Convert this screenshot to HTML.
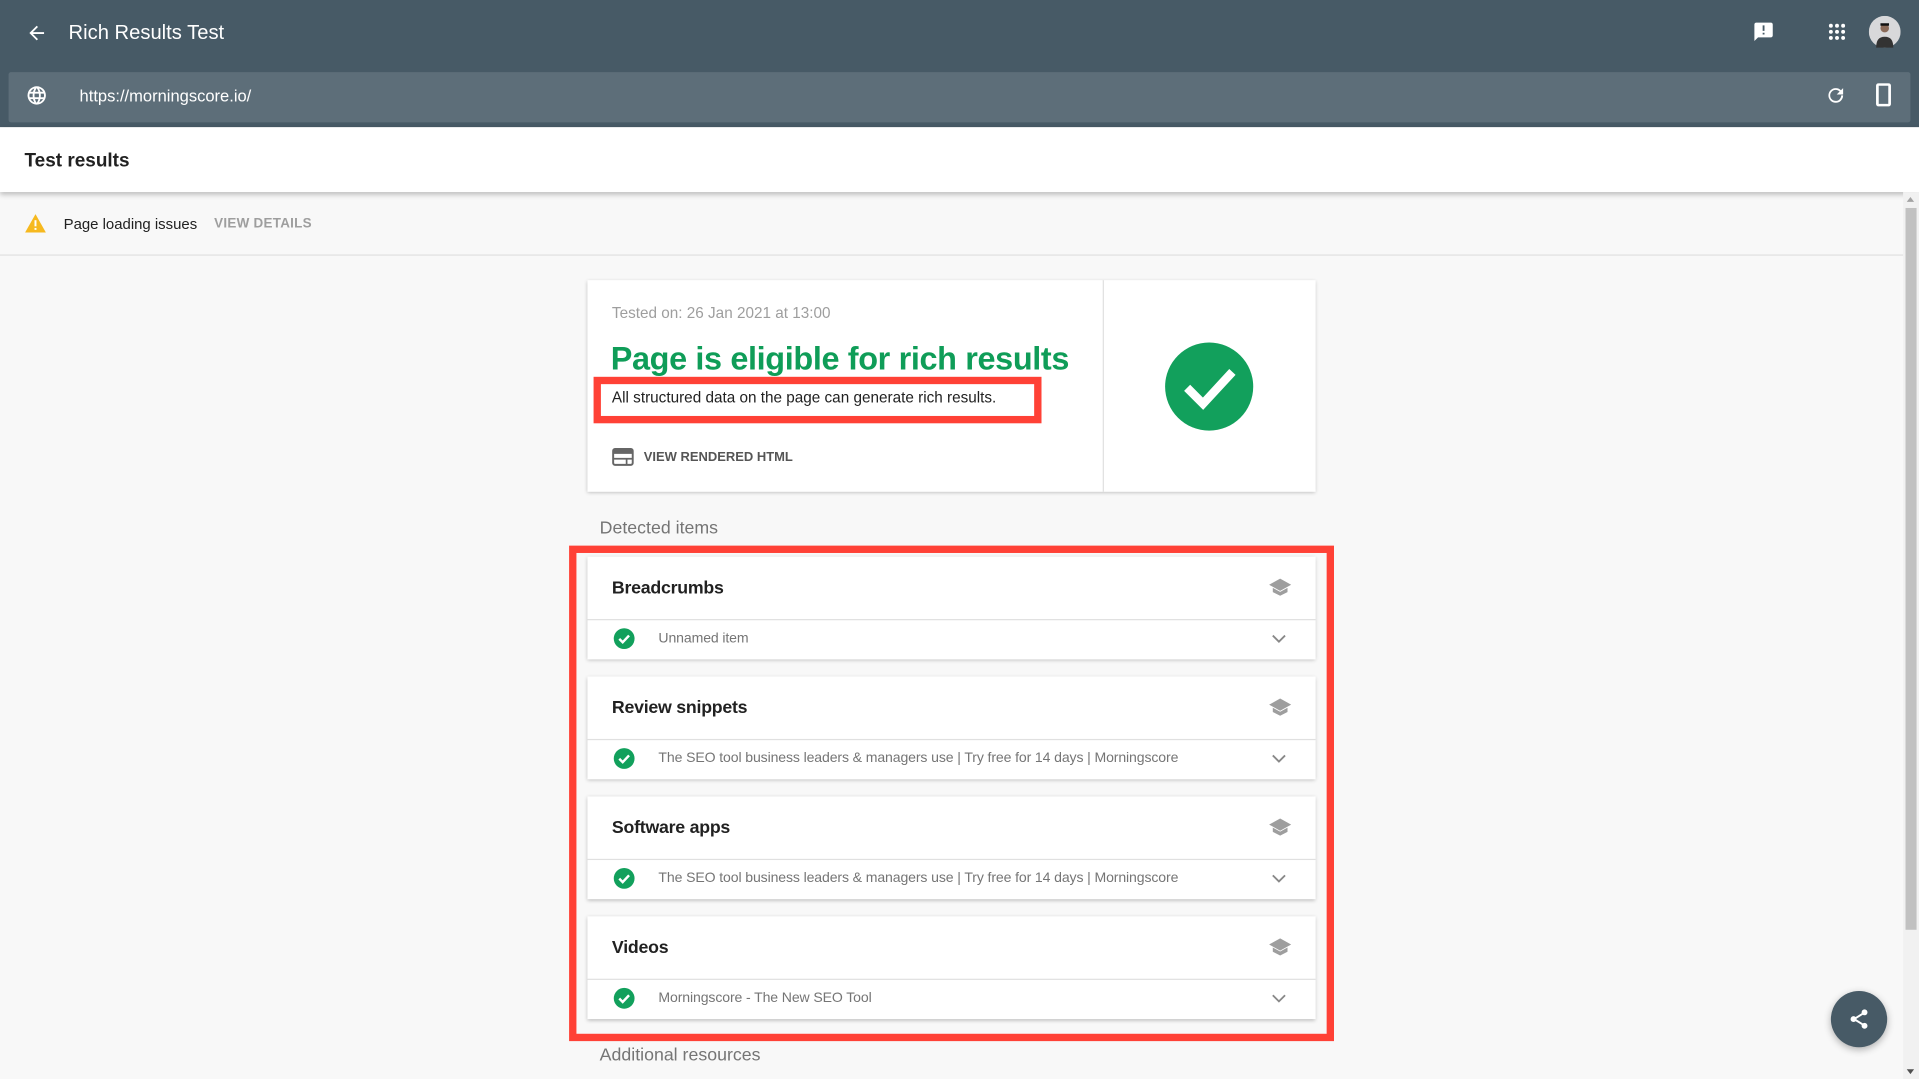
<!DOCTYPE html>
<html><head><meta charset="utf-8"><style>
html,body{margin:0;padding:0;width:1919px;height:1079px;overflow:hidden;background:#f8f8f8;font-family:"Liberation Sans",Arial,sans-serif}
#w{position:absolute;left:0;top:0;width:1568px;height:882px;transform:scale(1.22385,1.2234);transform-origin:0 0;background:#f8f8f8}
.a{position:absolute}
.hd{left:0;top:0;width:1568px;height:104px;background:#475a66}
.url{left:7px;top:59px;width:1554px;height:41px;background:#5d6e79;border-radius:2px}
.tb{left:0;top:104px;width:1568px;height:53px;background:#fff;box-shadow:0 2px 4px rgba(0,0,0,.25)}
.card{background:#fff;box-shadow:0 1px 3px rgba(0,0,0,.25)}
.t{white-space:nowrap}
.item{left:480px;width:595px;height:84px}
.item .h{position:absolute;left:20px;top:18px;font-size:14.5px;font-weight:bold;color:#212121;letter-spacing:-.2px}
.item .ln{position:absolute;left:0;top:51px;width:595px;height:1px;background:#e0e0e0}
.item .r{position:absolute;left:58px;top:61px;font-size:11.5px;color:#757575;letter-spacing:-.1px}
.item .ck{position:absolute;left:21px;top:58px}
.item .cap{position:absolute;left:556px;top:17px}
.item .ch{position:absolute;left:559px;top:63px}
</style></head><body><div id="w">
<div class="a hd"></div>
<svg class="a" style="left:21px;top:18px" width="18" height="18" viewBox="0 0 24 24"><path d="M20 11H7.8l5.6-5.6L12 4l-8 8 8 8 1.4-1.4L7.8 13H20z" fill="#fff"/></svg>
<div class="a t" style="left:56px;top:18px;font-size:16.5px;color:#fff">Rich Results Test</div>
<svg class="a" style="left:1432px;top:17px" width="18" height="18" viewBox="0 0 24 24"><path d="M20 2H4c-1.1 0-2 .9-2 2v18l4-4h14c1.1 0 2-.9 2-2V4c0-1.1-.9-2-2-2zm-7 9h-2V5h2v6zm0 4h-2v-2h2v2z" fill="#fff"/></svg>
<svg class="a" style="left:1493px;top:18px" width="16" height="16" viewBox="0 0 16 16" fill="#fff"><circle cx="3" cy="3" r="1.6"/><circle cx="8" cy="3" r="1.6"/><circle cx="13" cy="3" r="1.6"/><circle cx="3" cy="8" r="1.6"/><circle cx="8" cy="8" r="1.6"/><circle cx="13" cy="8" r="1.6"/><circle cx="3" cy="13" r="1.6"/><circle cx="8" cy="13" r="1.6"/><circle cx="13" cy="13" r="1.6"/></svg>
<svg class="a" style="left:1527px;top:13px" width="26" height="26" viewBox="0 0 26 26"><circle cx="13" cy="13" r="13" fill="#d8d8da"/><path d="M6 26c0-6 2-9 7-9s7 3 7 9z" fill="#333"/><circle cx="13" cy="10" r="3.5" fill="#8a6a58"/><path d="M9.5 8h7v-2h-7z" fill="#111"/></svg>
<div class="a url"></div>
<svg class="a" style="left:21px;top:69px" width="18" height="18" viewBox="0 0 24 24"><path d="M12 2a10 10 0 100 20 10 10 0 000-20zm6.9 6h-2.9a15.7 15.7 0 00-1.4-3.6A8 8 0 0118.9 8zM12 4c.8 1.2 1.5 2.5 1.9 4h-3.8c.4-1.4 1.1-2.8 1.9-4zM4.3 14a8 8 0 010-4h3.4a16.5 16.5 0 000 4zm.8 2h2.9c.3 1.3.8 2.5 1.4 3.6A8 8 0 015.1 16zM8 8H5.1a8 8 0 014.3-3.6C8.8 5.5 8.3 6.7 8 8zm4 12c-.8-1.2-1.5-2.5-1.9-4h3.8c-.4 1.4-1.1 2.8-1.9 4zm2.3-6H9.7a14.7 14.7 0 010-4h4.6a14.7 14.7 0 010 4zm.3 5.6c.6-1.1 1.1-2.3 1.4-3.6h2.9a8 8 0 01-4.3 3.6zm1.7-5.6a16.5 16.5 0 000-4h3.4a8 8 0 010 4z" fill="#fff"/></svg>
<div class="a t" style="left:65px;top:71px;font-size:13.5px;color:#fff">https://morningscore.io/</div>
<svg class="a" style="left:1491px;top:69px" width="18" height="18" viewBox="0 0 24 24"><path d="M17.65 6.35A7.96 7.96 0 0012 4a8 8 0 108 8h-2.1A6 6 0 1112 6c1.66 0 3.14.69 4.22 1.78L13 11h7V4z" fill="#fff"/></svg>
<svg class="a" style="left:1530px;top:68px" width="18" height="19" viewBox="0 0 18 19"><rect x="4" y="1" width="10" height="17" rx="1" fill="none" stroke="#fff" stroke-width="2.2"/></svg>
<div class="a tb"></div>
<div class="a t" style="left:20px;top:123px;font-size:15.5px;font-weight:bold;color:#212121">Test results</div>
<svg class="a" style="left:20px;top:174px" width="18" height="17" viewBox="0 0 18 17"><path d="M9 1L17.5 16H.5z" fill="#f6b91f"/><rect x="8.2" y="6" width="1.6" height="5" fill="#fff"/><rect x="8.2" y="12.3" width="1.6" height="1.6" fill="#fff"/></svg>
<div class="a t" style="left:52px;top:176px;font-size:12.2px;color:#212121">Page loading issues</div>
<div class="a t" style="left:175px;top:177px;font-size:11px;font-weight:bold;color:#9e9e9e;letter-spacing:.2px">VIEW DETAILS</div>
<div class="a" style="left:0;top:208px;width:1555px;height:1px;background:#e0e0e0"></div>
<div class="a" style="left:1555px;top:157px;width:13px;height:725px;background:#f1f1f1"></div>
<div class="a" style="left:1557px;top:170px;width:9px;height:590px;background:#c1c1c1"></div>
<div class="a" style="left:1558px;top:161px;width:0;height:0;border-left:3.5px solid transparent;border-right:3.5px solid transparent;border-bottom:4px solid #a3a3a3"></div>
<div class="a" style="left:1558px;top:874px;width:0;height:0;border-left:3.5px solid transparent;border-right:3.5px solid transparent;border-top:4px solid #505050"></div>

<div class="a card" style="left:480px;top:229px;width:595px;height:173px"></div>
<div class="a" style="left:901px;top:229px;width:1px;height:173px;background:#e0e0e0"></div>
<div class="a t" style="left:500px;top:249px;font-size:12.5px;color:#9e9e9e">Tested on: 26 Jan 2021 at 13:00</div>
<div class="a t" style="left:499px;top:278px;font-size:26.5px;font-weight:bold;color:#0f9d58;letter-spacing:-.3px">Page is eligible for rich results</div>
<div class="a" style="left:485px;top:308px;width:354px;height:26px;border:6px solid #ff4136"></div>
<div class="a t" style="left:500px;top:318px;font-size:12.5px;color:#212121">All structured data on the page can generate rich results.</div>
<svg class="a" style="left:500px;top:366px" width="18" height="15" viewBox="0 0 18 15"><rect x="1" y="1" width="16" height="13" rx="1.5" fill="none" stroke="#666" stroke-width="1.6"/><rect x="1" y="1" width="16" height="4" fill="#666"/><path d="M1 9h16M12 9v5" stroke="#666" stroke-width="1.4"/></svg>
<div class="a t" style="left:526px;top:368px;font-size:10.6px;font-weight:bold;color:#555;letter-spacing:0">VIEW RENDERED HTML</div>
<svg class="a" style="left:951px;top:279px" width="74" height="74" viewBox="0 0 74 74"><circle cx="37" cy="37" r="36" fill="#12a05c"/><path d="M19 38l13 13 24-26" fill="none" stroke="#fff" stroke-width="7"/></svg>

<div class="a t" style="left:490px;top:424px;font-size:14.5px;color:#757575">Detected items</div>

<div class="a card item" style="top:455px"><div class="h">Breadcrumbs</div><div class="ln"></div>
<svg class="ck" width="18" height="18" viewBox="0 0 18 18"><circle cx="9" cy="9" r="8.5" fill="#12a05c"/><path d="M5 9.2l2.8 2.8 5.2-5.5" fill="none" stroke="#fff" stroke-width="2"/></svg>
<div class="r">Unnamed item</div>
<svg class="cap" width="20" height="16" viewBox="0 0 20 16"><path d="M10 1L1 6l9 5 9-5z" fill="#9e9e9e"/><path d="M4 8.5v3.5l6 3 6-3V8.5l-6 3.3z" fill="#9e9e9e"/></svg>
<svg class="ch" width="12" height="8" viewBox="0 0 12 8"><path d="M1 1.5l5 5 5-5" fill="none" stroke="#888" stroke-width="1.5"/></svg></div>

<div class="a card item" style="top:553px"><div class="h">Review snippets</div><div class="ln"></div>
<svg class="ck" width="18" height="18" viewBox="0 0 18 18"><circle cx="9" cy="9" r="8.5" fill="#12a05c"/><path d="M5 9.2l2.8 2.8 5.2-5.5" fill="none" stroke="#fff" stroke-width="2"/></svg>
<div class="r">The SEO tool business leaders &amp; managers use | Try free for 14 days | Morningscore</div>
<svg class="cap" width="20" height="16" viewBox="0 0 20 16"><path d="M10 1L1 6l9 5 9-5z" fill="#9e9e9e"/><path d="M4 8.5v3.5l6 3 6-3V8.5l-6 3.3z" fill="#9e9e9e"/></svg>
<svg class="ch" width="12" height="8" viewBox="0 0 12 8"><path d="M1 1.5l5 5 5-5" fill="none" stroke="#888" stroke-width="1.5"/></svg></div>

<div class="a card item" style="top:651px"><div class="h">Software apps</div><div class="ln"></div>
<svg class="ck" width="18" height="18" viewBox="0 0 18 18"><circle cx="9" cy="9" r="8.5" fill="#12a05c"/><path d="M5 9.2l2.8 2.8 5.2-5.5" fill="none" stroke="#fff" stroke-width="2"/></svg>
<div class="r">The SEO tool business leaders &amp; managers use | Try free for 14 days | Morningscore</div>
<svg class="cap" width="20" height="16" viewBox="0 0 20 16"><path d="M10 1L1 6l9 5 9-5z" fill="#9e9e9e"/><path d="M4 8.5v3.5l6 3 6-3V8.5l-6 3.3z" fill="#9e9e9e"/></svg>
<svg class="ch" width="12" height="8" viewBox="0 0 12 8"><path d="M1 1.5l5 5 5-5" fill="none" stroke="#888" stroke-width="1.5"/></svg></div>

<div class="a card item" style="top:749px"><div class="h">Videos</div><div class="ln"></div>
<svg class="ck" width="18" height="18" viewBox="0 0 18 18"><circle cx="9" cy="9" r="8.5" fill="#12a05c"/><path d="M5 9.2l2.8 2.8 5.2-5.5" fill="none" stroke="#fff" stroke-width="2"/></svg>
<div class="r">Morningscore - The New SEO Tool</div>
<svg class="cap" width="20" height="16" viewBox="0 0 20 16"><path d="M10 1L1 6l9 5 9-5z" fill="#9e9e9e"/><path d="M4 8.5v3.5l6 3 6-3V8.5l-6 3.3z" fill="#9e9e9e"/></svg>
<svg class="ch" width="12" height="8" viewBox="0 0 12 8"><path d="M1 1.5l5 5 5-5" fill="none" stroke="#888" stroke-width="1.5"/></svg></div>

<div class="a" style="left:465px;top:446px;width:613px;height:393px;border:6px solid #ff4136"></div>
<div class="a t" style="left:490px;top:855px;font-size:14.5px;color:#757575">Additional resources</div>

<div class="a" style="left:1496px;top:810px;width:46px;height:46px;border-radius:50%;background:#475a66;box-shadow:0 2px 6px rgba(0,0,0,.3)"></div>
<svg class="a" style="left:1510px;top:824px" width="18" height="18" viewBox="0 0 18 18"><path d="M13 4L5 9l8 5" fill="none" stroke="#fff" stroke-width="1.6"/><circle cx="13.5" cy="3.5" r="2.4" fill="#fff"/><circle cx="4.5" cy="9" r="2.4" fill="#fff"/><circle cx="13.5" cy="14.5" r="2.4" fill="#fff"/></svg>
</div></body></html>
